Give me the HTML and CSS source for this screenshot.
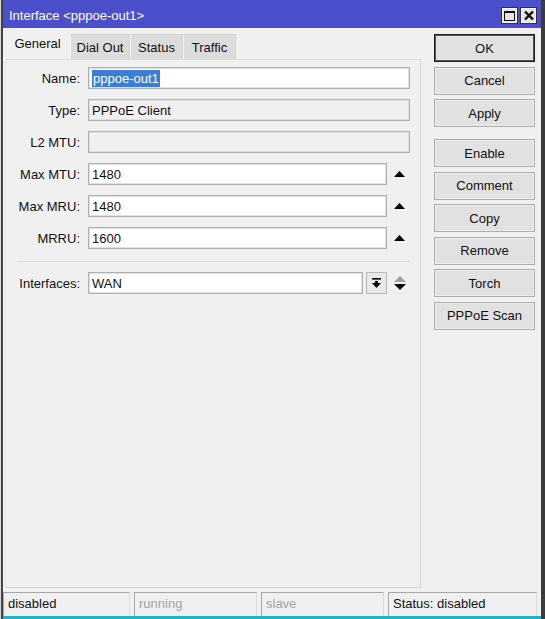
FILE: index.html
```html
<!DOCTYPE html>
<html>
<head>
<meta charset="utf-8">
<title>Interface &lt;pppoe-out1&gt;</title>
<link rel="stylesheet" href="styles.css">
</head>
<body>
<div class="window">
  <div class="titlebar">
    <span class="title">Interface &lt;pppoe-out1&gt;</span>
    <div class="tbtns">
      <span class="tbtn"><svg width="11" height="10" viewBox="0 0 11 10"><rect x="0.5" y="0.5" width="10" height="9" fill="none" stroke="#111" stroke-width="1"/><rect x="0" y="0" width="11" height="2" fill="#111"/></svg></span>
      <span class="tbtn"><svg width="10" height="9" viewBox="0 0 10 9"><path d="M1 0.5 L9 8.5 M9 0.5 L1 8.5" stroke="#111" stroke-width="2.4" fill="none"/></svg></span>
    </div>
  </div>
  <div class="content">
    <div class="leftcol">
      <div class="tabs">
        <span class="tab active">General</span>
        <span class="tab w60">Dial Out</span>
        <span class="tab w53">Status</span>
        <span class="tab w53">Traffic</span>
      </div>
      <div class="panel">
        <div class="row">
          <span class="label">Name:</span>
          <span class="field wide"><span class="sel">pppoe-out1</span></span>
        </div>
        <div class="row">
          <span class="label">Type:</span>
          <span class="field wide disabled">PPPoE Client</span>
        </div>
        <div class="row">
          <span class="label">L2 MTU:</span>
          <span class="field wide disabled"></span>
        </div>
        <div class="row">
          <span class="label">Max MTU:</span>
          <span class="field">1480</span>
          <span class="arrow"><svg width="11" height="6" viewBox="0 0 11 6"><polygon points="0,6 11,6 5.5,0" fill="#000"/></svg></span>
        </div>
        <div class="row">
          <span class="label">Max MRU:</span>
          <span class="field">1480</span>
          <span class="arrow"><svg width="11" height="6" viewBox="0 0 11 6"><polygon points="0,6 11,6 5.5,0" fill="#000"/></svg></span>
        </div>
        <div class="row">
          <span class="label">MRRU:</span>
          <span class="field">1600</span>
          <span class="arrow"><svg width="11" height="6" viewBox="0 0 11 6"><polygon points="0,6 11,6 5.5,0" fill="#000"/></svg></span>
        </div>
        <div class="separator"></div>
        <div class="row">
          <span class="label">Interfaces:</span>
          <span class="field short">WAN</span>
          <span class="ddbtn"><svg width="9" height="10" viewBox="0 0 9 10"><rect x="0" y="0" width="9" height="1.6" fill="#000"/><rect x="3" y="3" width="3" height="2.5" fill="#000"/><polygon points="0,5 9,5 4.5,10" fill="#000"/></svg></span>
          <span class="arrow updown"><svg width="12" height="15" viewBox="0 0 12 15"><polygon points="0,6 12,6 6,0" fill="#9aa39c"/><polygon points="0,8 12,8 6,14" fill="#000"/></svg></span>
        </div>
      </div>
    </div>
    <div class="buttons">
      <span class="btn default">OK</span>
      <span class="btn">Cancel</span>
      <span class="btn">Apply</span>
      <span class="btn group">Enable</span>
      <span class="btn">Comment</span>
      <span class="btn">Copy</span>
      <span class="btn">Remove</span>
      <span class="btn">Torch</span>
      <span class="btn">PPPoE Scan</span>
    </div>
  </div>
  <div class="statusbar">
    <span class="cell c1">disabled</span>
    <span class="cell c2 dim">running</span>
    <span class="cell c3 dim">slave</span>
    <span class="cell c4">Status: disabled</span>
  </div>
  <div class="accent"></div>
</div>
</body>
</html>
```

FILE: styles.css
```css
* { box-sizing: border-box; }
html, body {
  margin: 0;
  padding: 0;
  background: #d8d8d8;
}
body {
  font-family: "Liberation Sans", Arial, sans-serif;
  font-size: 13px;
  color: #111;
}
.window {
  width: 544px;
  height: 619px;
  margin-left: 1px;
  display: flex;
  flex-direction: column;
  background: #f0f0f0;
  border-left: 2px solid #444;
  border-right: 4px solid #3c3c3c;
}
.titlebar {
  height: 28px;
  flex: none;
  background: #4b4fcb;
  display: flex;
  align-items: center;
  justify-content: space-between;
  padding: 0 4px 0 6px;
}
.title {
  color: #fff;
  font-size: 13px;
  margin-top: 3px;
}
.tbtns {
  display: flex;
  gap: 2px;
  margin-top: 3px;
}
.tbtn {
  width: 17px;
  height: 17px;
  background: #e4e4e4;
  border: 1px solid #333;
  box-shadow: inset 0 0 0 1px #fafafa;
  display: flex;
  align-items: center;
  justify-content: center;
}
.content {
  flex: 1;
  display: flex;
  padding: 2px 0 0 2px;
}
.leftcol {
  width: 416px;
  display: flex;
  flex-direction: column;
}
.tabs {
  height: 29px;
  display: flex;
  align-items: flex-end;
  flex: none;
}
.tab {
  height: 25px;
  display: flex;
  align-items: center;
  justify-content: center;
  background: #dcdcdc;
  border: 1px solid #d2d2d2;
  border-bottom: none;
  border-left: 1px solid #f4f4f4;
}
.tab.active {
  width: 65px;
  height: 29px;
  background: #f0f0f0;
  border: none;
  padding-bottom: 3px;
}
.w60 { width: 60px; }
.w53 { width: 53px; }
.panel {
  flex: 1;
  border: 1px solid #d6d6d6;
  border-left: 1px solid #e2e2e2;
  border-top: 1px solid #dcdcdc;
  padding: 7px 10px 0 0;
  display: flex;
  flex-direction: column;
  gap: 10px;
}
.row {
  display: flex;
  align-items: center;
  height: 22px;
}
.label {
  width: 74px;
  text-align: right;
  margin-right: 8px;
  flex: none;
}
.field {
  width: 299px;
  height: 22px;
  background: #fff;
  border: 1px solid #b0b0b0;
  box-shadow: inset 0 0 0 1px #e0e0e0;
  display: flex;
  align-items: center;
  padding-left: 3px;
  flex: none;
}
.field.wide { width: 322px; }
.field.short { width: 275px; }
.field.disabled { background: #f0f0f0; }
.sel {
  background: #3b7ed8;
  color: #fff;
  line-height: 17px;
  padding: 0 1px;
}
.arrow {
  width: 23px;
  display: flex;
  align-items: center;
  padding-left: 7px;
  flex: none;
}
.updown { width: 20px; padding-left: 7px; }
.ddbtn {
  width: 21px;
  height: 22px;
  margin-left: 3px;
  background: #e8e8e8;
  border: 1px solid #b6b6b6;
  display: flex;
  align-items: center;
  justify-content: center;
  flex: none;
}
.separator {
  height: 1px;
  background: #dadada;
  margin: 2px 0 0 11px;
}
.buttons {
  width: 101px;
  margin-left: 13px;
  padding-top: 4px;
  display: flex;
  flex-direction: column;
  gap: 4.5px;
}
.btn {
  height: 28px;
  background: #e1e1e1;
  border: 1px solid #adadad;
  box-shadow: inset 0 0 0 1px #ececec;
  display: flex;
  align-items: center;
  justify-content: center;
  flex: none;
}
.btn.default {
  border: 1px solid #1e1e1e;
  box-shadow: inset 0 0 0 1px #555;
}
.btn.group { margin-top: 7.5px; }
.statusbar {
  height: 24px;
  flex: none;
  margin-top: 4px;
  display: flex;
  gap: 4px;
  padding-right: 4px;
}
.cell {
  border-top: 1px solid #a8a8a8;
  border-left: 1px solid #a8a8a8;
  border-right: 1px solid #dcdcdc;
  padding: 3px 0 0 4px;
  white-space: nowrap;
}
.c1 { width: 127px; }
.c2 { width: 123px; }
.c3 { width: 123px; }
.c4 { flex: 1; }
.dim { color: #a3a3a3; }
.accent {
  height: 3px;
  flex: none;
  background: #1cb6c7;
}
```
